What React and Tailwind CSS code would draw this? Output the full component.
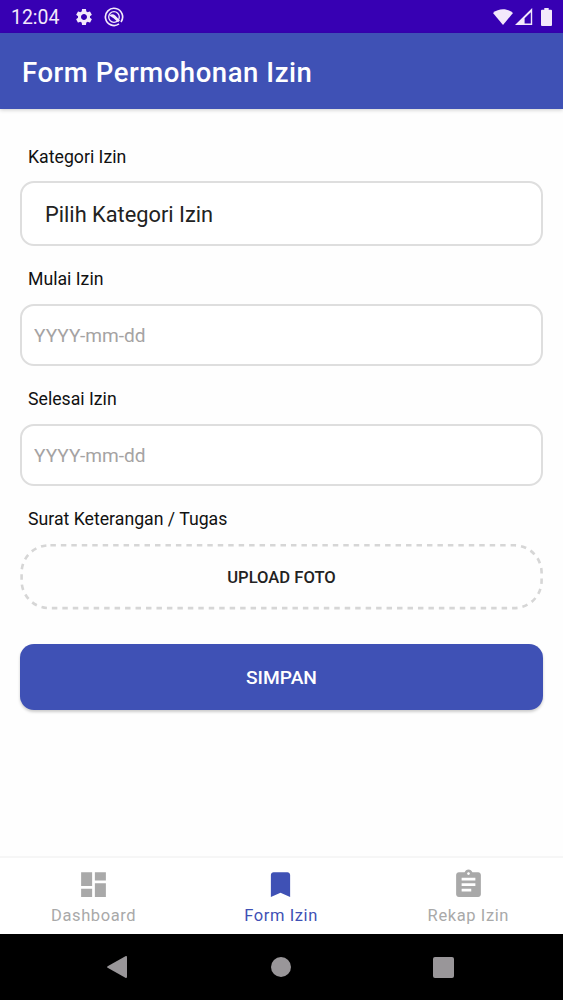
import React from 'react';
import { MdAssignment, MdBookmark, MdDashboard, MdSettings } from 'react-icons/md';

const tabs = [
  { label: 'Dashboard', Icon: MdDashboard },
  { label: 'Form Izin', Icon: MdBookmark, active: true },
  { label: 'Rekap Izin', Icon: MdAssignment },
];

function StatusBar() {
  return (
    <div className="flex h-[33px] items-center bg-[#3700b3] pr-[11px] pl-[11px] text-[#f3e9fb]">
      <span className="w-[63px] pt-[2px] text-[19.4px] leading-[33px]">12:04</span>
      <MdSettings className="h-5 w-5" />

      <svg viewBox="0 0 20 20" className="ml-[10px] h-5 w-5" fill="none">
        <path
          d="M15 16.9A8.6 8.6 0 1 1 17 14.9"
          stroke="currentColor"
          strokeWidth="1.7"
        />
        <circle cx="10" cy="10" r="5.3" stroke="currentColor" strokeWidth="1.3" />
        <path d="M5.3 8.4Q8.6 6.2 11.2 8.6L16 13.4 14 15.2 9.6 11.2Z" fill="currentColor" />
      </svg>

      <svg viewBox="0 0 20 16" className="ml-auto h-4 w-5" fill="currentColor">
        <path d="M0 3.9C5.8-1.1 14.2-1.1 20 3.9L10 16Z" />
      </svg>
      <svg viewBox="0 0 18 17" className="ml-[2px] h-[17px] w-[18px]">
        <path
          fill="currentColor"
          fillRule="evenodd"
          d="M17.2 0v17H0ZM15.8 4.2 9.6 10.2v5.2h6.2Z"
        />
      </svg>
      <svg viewBox="0 0 11 18" className="ml-[8px] h-[18px] w-[11px]" fill="currentColor">
        <path d="M3.3 0h4.4v1.8H10a1 1 0 0 1 1 1V17a1 1 0 0 1-1 1H1a1 1 0 0 1-1-1V2.8a1 1 0 0 1 1-1h2.3Z" />
      </svg>
    </div>
  );
}

function Label({ children }) {
  return <label className="block h-[19px] pl-2 text-[17.7px] leading-[21px] text-[#111]">{children}</label>;
}

function DateField({ label }) {
  return (
    <div>
      <Label>{label}</Label>
      <input
        placeholder="YYYY-mm-dd"
        className="mt-4 block h-[62px] w-full rounded-[14px] border-2 border-[#dedede] bg-white px-3 text-[19.1px] text-[#222] placeholder:text-[#a5a3a3]"
      />
    </div>
  );
}

function BottomTabs() {
  return (
    <nav className="grid h-[78px] grid-cols-3 border-t-2 border-[#f6f6f6] bg-white pr-px">
      {tabs.map(({ label, Icon, active }) => (
        <button
          key={label}
          className={`flex flex-col items-center pt-[10px] ${active ? 'text-[#3f51b5]' : 'text-[#a9a9a9]'}`}
        >
          <Icon className="h-[33px] w-[33px]" />
          <span className="mt-[5px] text-[16.5px] leading-[20px] tracking-[0.6px]">{label}</span>
        </button>
      ))}
    </nav>
  );
}

function SystemNav() {
  return (
    <div className="flex h-[66px] items-center bg-black text-[#999699]">
      <svg viewBox="0 0 20 22" className="ml-[107px] h-[22px] w-5" fill="currentColor">
        <path d="M18.4.2Q20-.5 20 1.2v19.6q0 1.7-1.6 1L.6 11.8Q-.3 11 .6 10.2Z" />
      </svg>
      <span className="ml-[144px] h-5 w-5 rounded-full bg-[#999699]" />
      <span className="ml-[142px] h-[21px] w-[21px] rounded-[2px] bg-[#999699]" />
    </div>
  );
}

export default function App() {
  return (
    <div className="flex h-[1000px] w-[563px] flex-col overflow-hidden bg-[#fefefe] font-[Roboto,sans-serif]">
      <StatusBar />

      <header className="flex h-[76px] items-center bg-[#3f51b5] pl-[22px] shadow-[0_1px_4px_rgba(0,0,0,0.2)]">
        <h1 className="pt-[3px] text-[27.5px] font-medium tracking-[0.55px] text-white">
          Form Permohonan Izin
        </h1>
      </header>

      <main className="flex flex-1 flex-col px-5 pt-[38px]">
        <Label>Kategori Izin</Label>
        <button className="mt-[15px] h-[65px] shrink-0 rounded-[14px] border-2 border-[#dedede] bg-white pt-[3px] pl-[23px] text-left text-[21.8px] text-[#222]">
          Pilih Kategori Izin
        </button>

        <div className="mt-[23px] flex flex-col gap-[23px]">
          <DateField label="Mulai Izin" />
          <DateField label="Selesai Izin" />
        </div>

        <div className="mt-[23px]">
          <Label>Surat Keterangan / Tugas</Label>
        </div>
        <button className="relative mt-4 h-[66px] shrink-0 pt-[2px] text-[16.6px] font-medium text-[#222]">
          <svg className="absolute inset-0 h-full w-full" fill="none">
            <rect
              x="1.6"
              y="1.3"
              width="520"
              height="62.8"
              rx="27.4"
              stroke="#d6d6d6"
              strokeWidth="2.6"
              strokeDasharray="5.46 5"
              strokeDashoffset="-1.4"
            />
          </svg>
          UPLOAD FOTO
        </button>

        <button className="mt-[34px] h-[66px] shrink-0 rounded-[14px] bg-[#3f51b5] pt-[2px] text-[19.2px] font-medium text-white shadow-[0_2px_3px_rgba(0,0,0,0.2)]">
          SIMPAN
        </button>
      </main>

      <BottomTabs />
      <SystemNav />
    </div>
  );
}
